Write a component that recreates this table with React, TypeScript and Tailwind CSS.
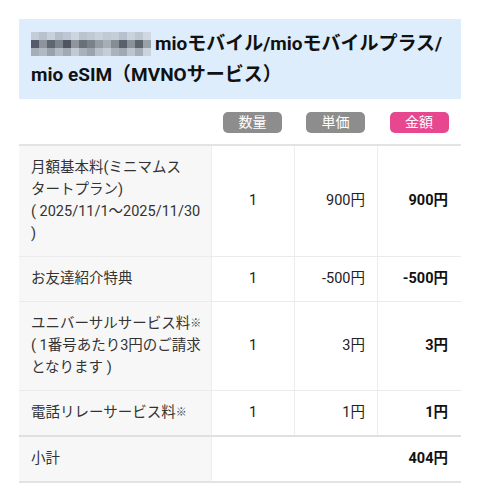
import React from "react";

const mosaic: string[][] = [
  ["#c3cdd8", "#b7c2ce", "#c7d1dc", "#b4bfcb", "#bcc7d3", "#cdd6e0", "#b9c4cf", "#c0cad5", "#c8d2dc", "#bfcad5", "#c4ced8", "#b6c1cd", "#c9d3dd", "#bdc8d3", "#d0d9e2"],
  ["#55596a", "#8d939c", "#5f6670", "#7d848c", "#4f5560", "#8e959d", "#6a7078", "#7b8189", "#959ca4", "#a8aeb6", "#868c94", "#5b616b", "#8c9299", "#5e646c", "#9aa0a8"],
  ["#a4adb8", "#b0b9c3", "#98a1ac", "#b3bcc6", "#a0a9b4", "#c1cad4", "#a8b1bb", "#9ba4ae", "#b8c1cb", "#c5ced7", "#aab3bd", "#a0a9b3", "#bcc5ce", "#a5aeb8", "#cbd3dc"],
];

const Kome = () => <span className="text-[11px] font-bold text-[#444] align-[1px]">※</span>;

type Row = { lines: React.ReactNode[]; qty: string; unit: string; amount: string; strong?: boolean };

const rows: Row[] = [
  {
    lines: ["月額基本料(ミニマムス", "タートプラン)", "( 2025/11/1～2025/11/30", ")"],
    qty: "1",
    unit: "900円",
    amount: "900円",
  },
  { lines: ["お友達紹介特典"], qty: "1", unit: "-500円", amount: "-500円" },
  {
    lines: [
      <>ユニバーサルサービス料<Kome /></>,
      "( 1番号あたり3円のご請求",
      "となります )",
    ],
    qty: "1",
    unit: "3円",
    amount: "3円",
  },
  { lines: [<>電話リレーサービス料<Kome /></>], qty: "1", unit: "1円", amount: "1円", strong: true },
];

export default function App() {
  return (
    <div
      className="w-[480px] h-[500px] bg-white px-[19px] pt-[19px]"
      style={{ fontFamily: 'Roboto, "Noto Sans CJK JP", sans-serif' }}
    >
      <div className="bg-[#ddedfc] px-3 py-[9px] text-[19px] leading-[31px] font-bold text-[#111]">
        <span className="inline-flex flex-col align-top mt-[4px] mr-[4px]">
          {mosaic.map((r, i) => (
            <span key={i} className="flex">
              {r.map((c, j) => (
                <span key={j} className="block w-[8px] h-[8px]" style={{ backgroundColor: c }} />
              ))}
            </span>
          ))}
        </span>
        mioモバイル/mioモバイルプラス/
        <br />
        mio eSIM（MVNOサービス）
      </div>

      <div className="grid grid-cols-[192px_83px_83px_84px] mt-[13px] mb-[11px]">
        <div />
        <div className="flex justify-center">
          <span className="w-[59px] h-[21px] rounded-[5px] bg-[#8d8d8d] text-white text-[14px] leading-[21px] text-center">数量</span>
        </div>
        <div className="flex justify-center">
          <span className="w-[59px] h-[21px] rounded-[5px] bg-[#8d8d8d] text-white text-[14px] leading-[21px] text-center">単価</span>
        </div>
        <div className="flex justify-center">
          <span className="w-[59px] h-[21px] rounded-[5px] bg-[#e6478e] text-white text-[14px] leading-[21px] text-center">金額</span>
        </div>
      </div>

      <div className="border-t-2 border-b-2 border-[#e3e3e3] text-[14.5px] leading-[22px]">
        {rows.map((r, i) => (
          <div
            key={i}
            className={
              "grid grid-cols-[192px_83px_83px_84px] " +
              (r.strong ? "border-b-2 border-[#e0e0e0]" : "border-b border-[#ebebeb]")
            }
          >
            <div className="bg-[#f7f7f7] px-3 py-[11px] text-[#333] whitespace-nowrap">
              {r.lines.map((l, k) => (
                <div key={k}>{l}</div>
              ))}
            </div>
            <div className="flex items-center justify-center border-l border-[#ededed] text-[#222]">{r.qty}</div>
            <div className="flex items-center justify-end pr-3 border-l border-[#ededed] text-[#222]">{r.unit}</div>
            <div className="flex items-center justify-end pr-[13px] border-l border-[#ededed] font-bold text-[#111]">{r.amount}</div>
          </div>
        ))}
        <div className="grid grid-cols-[192px_250px]">
          <div className="bg-[#f7f7f7] px-3 py-[11px] text-[#333]">小計</div>
          <div className="flex items-center justify-end pr-[13px] border-l border-[#ededed] font-bold text-[#111]">404円</div>
        </div>
      </div>
    </div>
  );
}
